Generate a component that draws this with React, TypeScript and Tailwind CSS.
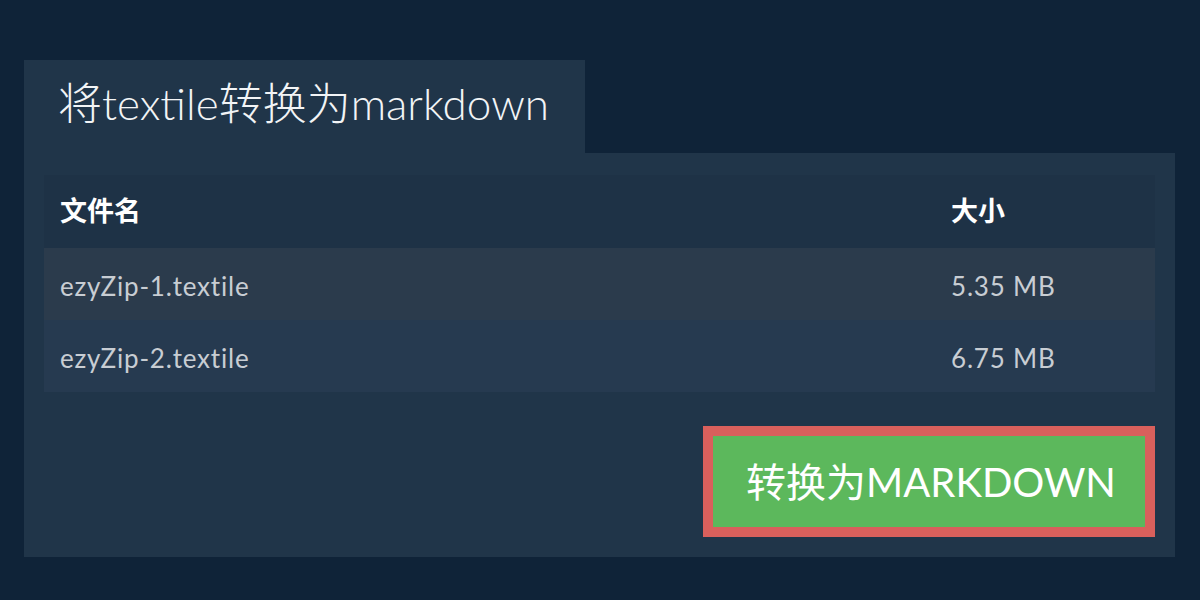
import React from "react";

const files = [
  { name: "ezyZip-1.textile", size: "5.35 MB" },
  { name: "ezyZip-2.textile", size: "6.75 MB" },
];

const font = { fontFamily: 'Lato, "Noto Sans CJK SC", sans-serif' };

export default function App() {
  return (
    <div className="w-[1200px] h-[600px] bg-[#0f2338] pt-[60px] px-[24px]" style={font}>
      <div className="flex w-[561px] h-[93px] items-center bg-[#203549] pl-[34px] pb-[8px]">
        <h1 className="text-[44px] font-light text-[#f2f4f6] leading-none whitespace-nowrap">将textile转换为markdown</h1>
      </div>
      <div className="w-[1151px] bg-[#203549] px-[20px] pt-[22px] pb-[20px]">
        <div className="w-full">
          <div className="flex h-[73px] items-center bg-[#1e3246] px-[16px] text-[27px] font-bold text-white">
            <div className="flex-1">文件名</div>
            <div className="w-[188px]">大小</div>
          </div>
          {files.map((f, i) => (
            <div
              key={f.name}
              className={
                "flex h-[72px] items-center px-[16px] pt-[4px] text-[26px] tracking-[0.8px] text-[#c8cdd3] " +
                (i === 0 ? "bg-[#2b3b4c]" : "bg-[#263a50]")
              }
            >
              <div className="flex-1">{f.name}</div>
              <div className="w-[188px]">{f.size}</div>
            </div>
          ))}
        </div>
        <div className="flex justify-end mt-[34px]">
          <button className="h-[111px] w-[452px] border-[10px] border-[#d9605c] bg-[#5cb85c] pl-[4px] text-[40px] text-white leading-none">
            转换为MARKDOWN
          </button>
        </div>
      </div>
    </div>
  );
}
